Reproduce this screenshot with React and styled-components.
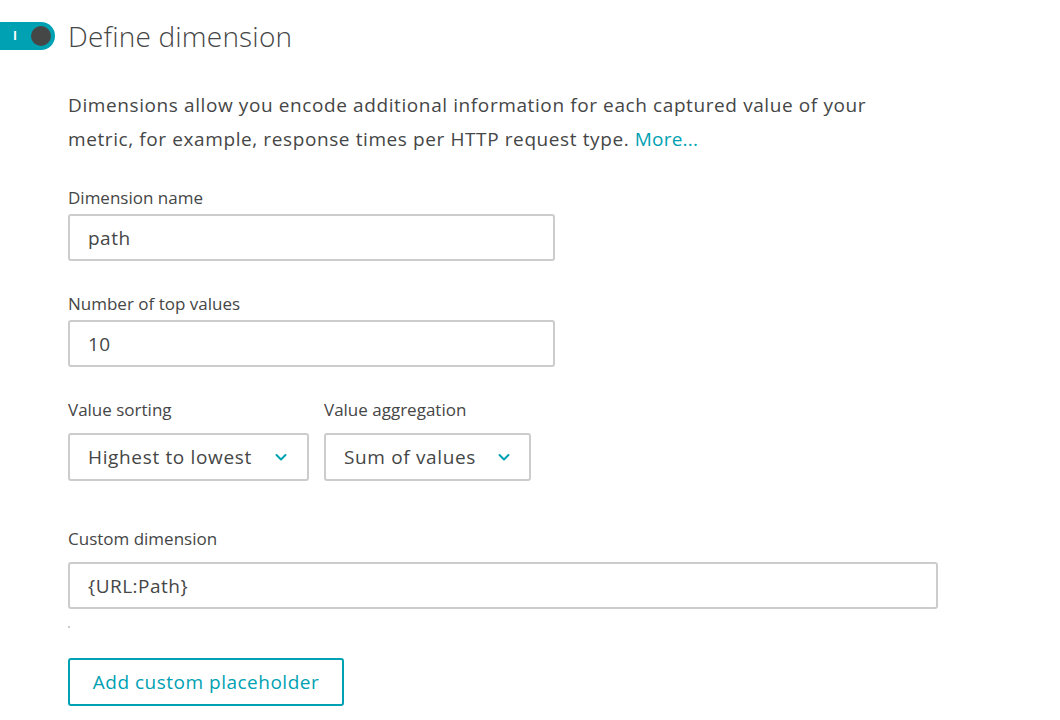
import React from 'react'
import styled, { createGlobalStyle } from 'styled-components'

const GlobalStyle = createGlobalStyle`
  body {
    margin: 0;
    background: #ffffff;
    font-family: "Open Sans", "Noto Sans", sans-serif;
    color: #454646;
  }
`

const App = () => {
  return (
    <Page>
      <GlobalStyle />
      <Header>
        <Toggle>
          <ToggleMark>I</ToggleMark>
          <Knob />
        </Toggle>
        <Title>Define dimension</Title>
      </Header>

      <Body>
        <Intro>
          Dimensions allow you encode additional information for each captured value of your
          <br />
          metric, for example, response times per HTTP request type. <Link>More...</Link>
        </Intro>

        <Field top="31px">
          <Label>Dimension name</Label>
          <Input width="487px" defaultValue="path" />
        </Field>

        <Field top="32px">
          <Label>Number of top values</Label>
          <Input width="487px" defaultValue="10" />
        </Field>

        <Row>
          <Field top="32px">
            <Label loose>Value sorting</Label>
            <Select width="241px" gap="22px">
              Highest to lowest
              <Chevron />
            </Select>
          </Field>
          <Field top="32px">
            <Label loose>Value aggregation</Label>
            <Select width="207px" gap="21px">
              Sum of values
              <Chevron />
            </Select>
          </Field>
        </Row>

        <Field top="47px">
          <Label loose>Custom dimension</Label>
          <Input width="870px" defaultValue="{URL:Path}" />
          <Dot />
        </Field>

        <Button>Add custom placeholder</Button>
      </Body>
    </Page>
  )
}

const Chevron = () => (
  <svg width="14" height="10" viewBox="0 0 14 10" fill="none">
    <path d="M2.5 3 L7 7.5 L11.5 3" stroke="#00a1b2" strokeWidth="2" strokeLinecap="round" strokeLinejoin="round" />
  </svg>
)

const Page = styled.div`
  width: 1060px;
  height: 720px;
  overflow: hidden;
  padding-top: 21px;
  box-sizing: border-box;
`

const Header = styled.div`
  display: flex;
  align-items: center;
  gap: 13px;
`

const Toggle = styled.div`
  width: 55px;
  height: 28px;
  border-radius: 0 14px 14px 0;
  background: #00a1b2;
  display: flex;
  align-items: center;
  justify-content: space-between;
  padding: 0 4px 0 13px;
  box-sizing: border-box;
`

const ToggleMark = styled.span`
  color: #ffffff;
  font-size: 12px;
  font-weight: 700;
  line-height: 1;
`

const Knob = styled.span`
  width: 20px;
  height: 20px;
  border-radius: 50%;
  background: #454646;
`

const Title = styled.h1`
  margin: 0;
  font-size: 28px;
  font-weight: 300;
  color: #454646;
  line-height: 30px;
  letter-spacing: 0.2px;
`

const Body = styled.div`
  padding: 0 0 0 68px;
  display: flex;
  flex-direction: column;
`

const Intro = styled.p`
  margin: 37px 0 0;
  font-size: 19px;
  line-height: 34px;
  letter-spacing: 0.6px;
  color: #454646;
  white-space: nowrap;
`

const Link = styled.a`
  color: #00a1b2;
  cursor: pointer;
  letter-spacing: 0.2px;
`

const Field = styled.div`
  display: flex;
  flex-direction: column;
  margin-top: ${(p) => p.top};
`

const Label = styled.label`
  font-size: 17px;
  line-height: 22px;
  color: #454646;
  margin-bottom: ${(p) => (p.loose ? '12px' : '5px')};
`

const Input = styled.input`
  width: ${(p) => p.width};
  height: 47px;
  box-sizing: border-box;
  border: 2px solid #cccccc;
  border-radius: 3px;
  padding: 0 18px;
  font-family: "Open Sans", "Noto Sans", sans-serif;
  font-size: 19px;
  letter-spacing: 0.5px;
  color: #454646;
  outline: none;
`

const Row = styled.div`
  display: flex;
  gap: 15px;
`

const Select = styled.div`
  width: ${(p) => p.width};
  height: 48px;
  box-sizing: border-box;
  border: 2px solid #cccccc;
  border-radius: 3px;
  padding: 0 18px;
  display: flex;
  align-items: center;
  gap: ${(p) => p.gap};
  font-size: 19px;
  letter-spacing: 0.65px;
  white-space: nowrap;
  color: #454646;
`

const Dot = styled.span`
  width: 2px;
  height: 2px;
  background: #cccccc;
  margin-top: 17px;
`

const Button = styled.button`
  margin-top: 30px;
  align-self: flex-start;
  width: 276px;
  height: 48px;
  border: 2px solid #00a1b2;
  border-radius: 3px;
  background: #ffffff;
  color: #00a1b2;
  font-family: "Open Sans", "Noto Sans", sans-serif;
  font-size: 19px;
  letter-spacing: 0.5px;
  cursor: pointer;
`

export default App
